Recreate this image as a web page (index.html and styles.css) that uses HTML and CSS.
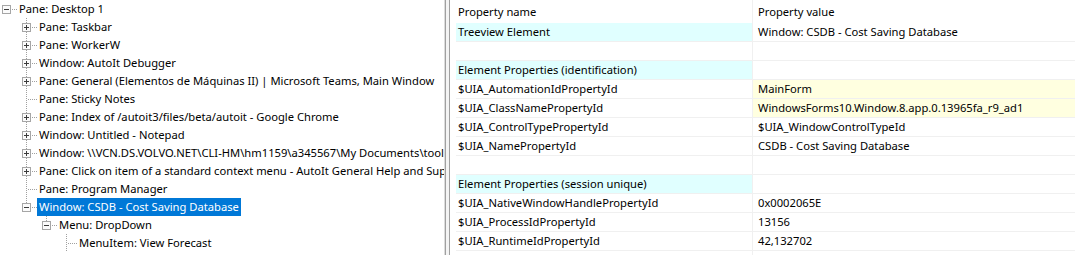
FILE: index.html
```html
<!DOCTYPE html>
<html>
<head>
<meta charset="utf-8">
<link rel="stylesheet" href="styles.css">
</head>
<body>
<div class="app">
  <div class="tree">
    <div class="row"><span class="n root"><span class="box minus"></span></span><span class="lbl">Pane: Desktop 1</span></div>
    <div class="row"><span class="ind"></span><span class="n mid"><span class="box plus"></span></span><span class="lbl">Pane: Taskbar</span></div>
    <div class="row"><span class="ind"></span><span class="n mid"><span class="box plus"></span></span><span class="lbl">Pane: WorkerW</span></div>
    <div class="row"><span class="ind"></span><span class="n mid"><span class="box plus"></span></span><span class="lbl">Window: AutoIt Debugger</span></div>
    <div class="row"><span class="ind"></span><span class="n mid"><span class="box plus"></span></span><span class="lbl">Pane: General (Elementos de Máquinas II) | Microsoft Teams, Main Window</span></div>
    <div class="row"><span class="ind"></span><span class="n mid"></span><span class="lbl">Pane: Sticky Notes</span></div>
    <div class="row"><span class="ind"></span><span class="n mid"><span class="box plus"></span></span><span class="lbl">Pane: Index of /autoit3/files/beta/autoit - Google Chrome</span></div>
    <div class="row"><span class="ind"></span><span class="n mid"><span class="box plus"></span></span><span class="lbl">Window: Untitled - Notepad</span></div>
    <div class="row"><span class="ind"></span><span class="n mid"><span class="box plus"></span></span><span class="lbl">Window: \\VCN.DS.VOLVO.NET\CLI-HM\hm1159\a345567\My Documents\tools\CSDB.accdb</span></div>
    <div class="row"><span class="ind"></span><span class="n mid"><span class="box plus"></span></span><span class="lbl">Pane: Click on item of a standard context menu - AutoIt General Help and Support - AutoIt Forums</span></div>
    <div class="row"><span class="ind"></span><span class="n mid"></span><span class="lbl">Pane: Program Manager</span></div>
    <div class="row"><span class="ind"></span><span class="n last"><span class="box minus"></span></span><span class="lbl sel">Window: CSDB - Cost Saving Database</span></div>
    <div class="row"><span class="ind"></span><span class="ind"></span><span class="n last"><span class="box minus"></span></span><span class="lbl">Menu: DropDown</span></div>
    <div class="row"><span class="ind"></span><span class="ind"></span><span class="ind"></span><span class="n mid"></span><span class="lbl">MenuItem: View Forecast</span></div>
  </div>
  <div class="splitter"></div>
  <div class="props">
    <div class="tr head"><div class="c1">Property name</div><div class="c2">Property value</div></div>
    <div class="tr"><div class="c1 cyan">Treeview Element</div><div class="c2">Window: CSDB - Cost Saving Database</div></div>
    <div class="tr"><div class="c1"></div><div class="c2"></div></div>
    <div class="tr"><div class="c1 cyan">Element Properties (identification)</div><div class="c2"></div></div>
    <div class="tr"><div class="c1">$UIA_AutomationIdPropertyId</div><div class="c2 yellow">MainForm</div></div>
    <div class="tr"><div class="c1">$UIA_ClassNamePropertyId</div><div class="c2 yellow">WindowsForms10.Window.8.app.0.13965fa_r9_ad1</div></div>
    <div class="tr"><div class="c1">$UIA_ControlTypePropertyId</div><div class="c2">$UIA_WindowControlTypeId</div></div>
    <div class="tr"><div class="c1">$UIA_NamePropertyId</div><div class="c2">CSDB - Cost Saving Database</div></div>
    <div class="tr"><div class="c1"></div><div class="c2"></div></div>
    <div class="tr"><div class="c1 cyan">Element Properties (session unique)</div><div class="c2"></div></div>
    <div class="tr"><div class="c1">$UIA_NativeWindowHandlePropertyId</div><div class="c2">0x0002065E</div></div>
    <div class="tr"><div class="c1">$UIA_ProcessIdPropertyId</div><div class="c2">13156</div></div>
    <div class="tr"><div class="c1">$UIA_RuntimeIdPropertyId</div><div class="c2">42,132702</div></div>
    <div class="tr"><div class="c1"></div><div class="c2"></div></div>
  </div>
</div>
</body>
</html>
```
FILE: styles.css
```css
html, body {
  margin: 0;
  padding: 0;
  background: #fff;
}
body {
  font-family: "Noto Sans", "Open Sans", sans-serif;
  font-size: 11.2px;
  color: #000;
}
.app {
  display: flex;
  width: 1075px;
  height: 255px;
  overflow: hidden;
}

/* ---------- tree ---------- */
.tree {
  width: 444px;
  flex: none;
  overflow: hidden;
}
.row {
  display: flex;
  height: 18px;
  white-space: nowrap;
}
.ind {
  width: 20px;
  flex: none;
}
.n {
  width: 17px;
  flex: none;
  display: flex;
  align-items: flex-start;
  --dotv: repeating-linear-gradient(to bottom, #a0a0a0 0 1px, transparent 1px 2px);
  --doth: repeating-linear-gradient(to right, #a0a0a0 0 1px, transparent 1px 2px);
  background-repeat: no-repeat;
}
.n.root {
  background-image: var(--doth);
  background-position: 8px 9px;
  background-size: 9px 1px;
}
.n.mid {
  background-image: var(--dotv), var(--doth);
  background-position: 6px 0, 8px 9px;
  background-size: 1px 18px, 9px 1px;
}
.n.last {
  background-image: var(--dotv), var(--doth);
  background-position: 6px 0, 8px 9px;
  background-size: 1px 10px, 9px 1px;
}
.box {
  width: 7px;
  height: 7px;
  margin: 5px 0 0 2px;
  border: 1px solid #a6a6a6;
  background-color: #fbfbfb;
  background-repeat: no-repeat;
  background-position: center, center;
}
.box.minus {
  background-image: linear-gradient(#3c3c3c, #3c3c3c);
  background-size: 5px 1px;
}
.box.plus {
  background-image: linear-gradient(#3c3c3c, #3c3c3c), linear-gradient(#3c3c3c, #3c3c3c);
  background-size: 5px 1px, 1px 5px;
}
.lbl {
  padding: 0 2px;
  line-height: 18px;
  height: 18px;
}
.lbl.sel {
  background: #0078d7;
  color: #fff;
}

/* ---------- splitter ---------- */
.splitter {
  width: 7px;
  flex: none;
  background: linear-gradient(to right, #dcdcdc 0 1px, #a0a0a0 1px 2px, #f4f4f4 2px 5px, #a0a0a0 5px 6px, #fff 6px 7px);
}

/* ---------- property grid ---------- */
.props {
  flex: 1;
  padding-left: 5px;
  overflow: hidden;
}
.tr {
  display: grid;
  grid-template-columns: 297px 1fr;
  height: 19px;
  white-space: nowrap;
}
.tr > div {
  border-bottom: 1px solid #f0f0f0;
  line-height: 18px;
  height: 18px;
  overflow: hidden;
}
.tr .c1 {
  border-right: 1px solid #f0f0f0;
  padding-left: 2px;
}
.tr .c2 {
  padding-left: 5px;
}
.tr.head {
  height: 23px;
}
.tr.head > div {
  border-bottom: none;
  height: 23px;
  line-height: 23px;
}
.cyan {
  background: #e0ffff;
}
.yellow {
  background: #ffffe0;
}
```
